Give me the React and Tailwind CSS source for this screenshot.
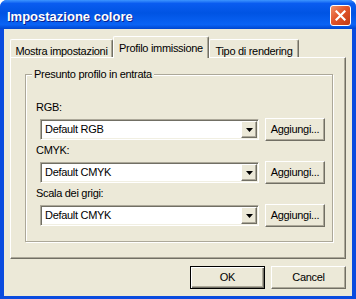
import React from 'react';

const raised =
  'border border-t-white border-l-white border-r-[#716F64] border-b-[#716F64] shadow-[inset_-1px_-1px_0_#ACA899]';

const ComboRow = ({ label, value }) => (
  <div>
    <div className="h-[13px] leading-[13px] pl-[10px]">{label}</div>
    <div className="mt-[4px] flex items-center pl-[14px] pr-[7px]">
      <div className="flex h-[21px] w-[219px] border border-t-[#ACA899] border-l-[#ACA899] border-r-white border-b-white bg-white p-[1px] shadow-[inset_1px_1px_0_#716F64,inset_-1px_-1px_0_#F1EFE2]">
        <div className="flex-1 pl-[3px] leading-[17px]">{value}</div>
        <div className={`flex w-[16px] items-center justify-center bg-[#ECE9D8] ${raised}`}>
          <svg width="7" height="4" viewBox="0 0 7 4">
            <polygon points="0,0 7,0 3.5,4" fill="#000" />
          </svg>
        </div>
      </div>
      <button
        type="button"
        className={`ml-auto flex h-[23px] w-[60px] items-center justify-center bg-[#ECE9D8] ${raised}`}
      >
        Aggiungi...
      </button>
    </div>
  </div>
);

const Tab = ({ active, width, children }) =>
  active ? (
    <div
      className={`relative z-10 -mb-[1px] flex h-[22px] items-start justify-center rounded-t-[2px] border-l border-t border-r border-l-white border-t-white border-r-[#716F64] bg-[#ECE9D8] pt-[3px] shadow-[inset_-1px_0_0_#ACA899] ${width}`}
    >
      {children}
    </div>
  ) : (
    <div
      className={`flex h-[18px] items-start justify-center rounded-t-[2px] border-l border-t border-r border-l-white border-t-white border-r-[#716F64] bg-[#ECE9D8] pt-[3px] shadow-[inset_-1px_0_0_#ACA899] ${width}`}
    >
      {children}
    </div>
  );

export default function App() {
  return (
    <div className="flex h-[299px] w-[356px] flex-col rounded-t-[7px] bg-[#0A4BDF] font-['Liberation_Sans',Arial,sans-serif] text-[11px] tracking-[-0.3px] text-black">
      <div className="flex h-[29px] items-start rounded-t-[7px] bg-[linear-gradient(180deg,#3D95FF_0%,#0A5CF0_12%,#0054E3_45%,#0A63F5_85%,#0046CF_100%)]">
        <div className="mt-[7px] pl-[7px] text-[13px] font-bold tracking-normal text-white [text-shadow:1px_1px_0_#0A1F8F]">
          Impostazione colore
        </div>
        <div className="ml-auto mr-[5px] mt-[5px] flex h-[21px] w-[21px] items-center justify-center rounded-[3px] border border-white bg-[linear-gradient(135deg,#F0916A_0%,#E2552B_45%,#C23A12_100%)]">
          <svg width="11" height="11" viewBox="0 0 11 11">
            <path d="M1.5 1.5 L9.5 9.5 M9.5 1.5 L1.5 9.5" stroke="#fff" strokeWidth="2.2" strokeLinecap="square" />
          </svg>
        </div>
      </div>

      <div className="mx-[4px] mb-[3px] flex flex-1 flex-col bg-[#ECE9D8] px-[6px] pt-[7px]">
        <div className="flex h-[21px] items-end">
          <Tab width="w-[103px]">Mostra impostazioni</Tab>
          <Tab active width="w-[96px]">Profilo immissione</Tab>
          <Tab width="w-[90px]">Tipo di rendering</Tab>
        </div>

        <div className="h-[202px] border border-t-white border-l-white border-r-[#716F64] border-b-[#716F64] px-[14px] pb-[16px] pt-[16px] pr-[12px] shadow-[inset_-1px_-1px_0_#ACA899]">
          <div className="relative h-full border border-[#ACA899] pt-[26px] shadow-[inset_1px_1px_0_#fff,1px_1px_0_#fff]">
            <div className="absolute -top-[7px] left-[6px] bg-[#ECE9D8] px-[2px] leading-[13px]">
              Presunto profilo in entrata
            </div>
            <div className="flex flex-col gap-[3px]">
              <ComboRow label="RGB:" value="Default RGB" />
              <ComboRow label="CMYK:" value="Default CMYK" />
              <ComboRow label="Scala dei grigi:" value="Default CMYK" />
            </div>
          </div>
        </div>

        <div className="mt-[7px] flex justify-end gap-[6px]">
          <button
            type="button"
            className="flex h-[23px] w-[75px] items-center justify-center border border-black bg-[#ECE9D8] shadow-[inset_1px_1px_0_#fff,inset_-1px_-1px_0_#716F64,inset_-2px_-2px_0_#ACA899]"
          >
            OK
          </button>
          <button
            type="button"
            className={`flex h-[23px] w-[75px] items-center justify-center bg-[#ECE9D8] ${raised}`}
          >
            Cancel
          </button>
        </div>
      </div>
    </div>
  );
}
